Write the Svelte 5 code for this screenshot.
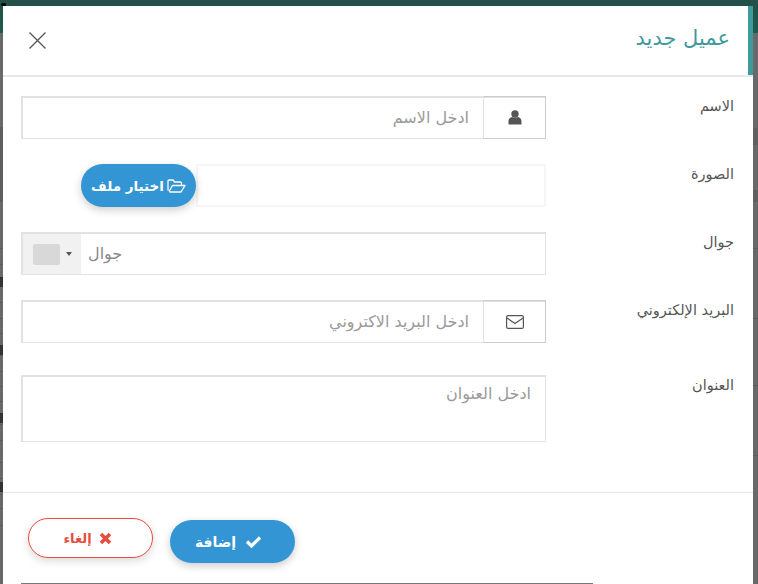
<script>
  const leftLines = [248, 264, 302, 318, 333, 355, 371, 386, 401, 424, 440, 462, 478, 494, 508, 525];
  const leftMarks = [277, 345, 413, 482];
  const rightLines = [248, 318, 385, 455];
</script>

<div class="page" dir="rtl">
  <div class="backdrop">
    <div class="topbar"></div>
    <i class="blob"></i>
    <i class="band left"></i>
    <i class="band right b1"></i>
    <i class="band right b2"></i>
    {#each leftLines as y}<i class="line left" style="top:{y}px"></i>{/each}
    {#each leftMarks as y}<i class="mark" style="top:{y}px"></i>{/each}
    {#each rightLines as y}<i class="line right" style="top:{y}px"></i>{/each}
  </div>

  <section class="modal">
    <header>
      <h1>عميل جديد</h1>
      <button class="close" aria-label="close">
        <svg width="17" height="17" viewBox="0 0 17 17"><path d="M.5.500l16 16M16.500.500l-16 16" stroke="#555" stroke-width="1.300" fill="none"/></svg>
      </button>
    </header>

    <form>
      <div class="row r1">
        <span class="label">الاسم</span>
        <div class="field">
          <span class="addon">
            <svg width="14" height="15" viewBox="0 0 14 15"><circle cx="7" cy="4" r="3.700" fill="#555"/><path d="M.5 15v-3.200C.5 9.300 2.300 8 4 7.600c1.800 1 4.200 1 6 0 1.700.4 3.500 1.700 3.500 4.200V15z" fill="#555" transform="translate(0 -.5)"/></svg>
          </span>
          <span class="input ph">ادخل الاسم</span>
        </div>
      </div>

      <div class="row r2">
        <span class="label">الصورة</span>
        <div class="filewrap">
          <span class="filebox"></span>
          <span class="filebtn">
            <svg width="19" height="14" viewBox="0 0 19 14"><path d="M2.500 13H14l4-6.500H5.500L2 12.500M1 11.500V2.300Q1 1 2.300 1H6l1.500 2H13q1.500 0 1.500 1.300v2.200" fill="none" stroke="#fff" stroke-width="1.300" stroke-linejoin="round"/></svg>
            اختيار ملف
          </span>
        </div>
      </div>

      <div class="row r3">
        <span class="label">جوال</span>
        <div class="field phone">
          <span class="flag"><i class="swatch"></i><i class="arrow"></i></span>
          <span class="phonetext" dir="rtl">جوال</span>
        </div>
      </div>

      <div class="row r4">
        <span class="label">البريد الإلكتروني</span>
        <div class="field">
          <span class="addon">
            <svg width="18" height="14" viewBox="0 0 18 14"><rect x=".6" y=".6" width="16.800" height="12.800" rx="1.500" fill="none" stroke="#555" stroke-width="1.200"/><path d="M1 3l8 5.500L17 3" fill="none" stroke="#555" stroke-width="1.200"/></svg>
          </span>
          <span class="input ph">ادخل البريد الاكتروني</span>
        </div>
      </div>

      <div class="row r5">
        <span class="label">العنوان</span>
        <div class="field area"><span class="ph">ادخل العنوان</span></div>
      </div>
    </form>

    <footer>
      <button class="btn primary">
        <svg width="17" height="13" viewBox="0 0 17 13"><path d="M2 6.500l4.500 4.500L15 2.500" fill="none" stroke="#fff" stroke-width="3.200"/></svg>
        إضافة
      </button>
      <button class="btn cancel">
        <svg width="13" height="13" viewBox="0 0 13 13"><path d="M2 2l9 9M11 2l-9 9" fill="none" stroke="#e74c3c" stroke-width="3.600"/></svg>
        إلغاء
      </button>
    </footer>
    <i class="under"></i>
  </section>
</div>

<style>
  :global(body) { margin: 0; background: #696969; }
  .page {
    position: relative; width: 758px; height: 584px; overflow: hidden;
    font-family: "DejaVu Sans", "Noto Sans", sans-serif; color: #555;
  }
  .backdrop { position: absolute; inset: 0; background: #696969; }
  .topbar { height: 33px; background: linear-gradient(#234f49, #1f5a4c); }
  .blob { position: absolute; left: 1px; top: 3px; width: 5px; height: 3px; border-radius: 2px; background: #000; z-index: 2; }
  .band { position: absolute; background: #5f5f5f; }
  .band.left { left: 0; width: 3px; top: 127px; height: 75px; }
  .band.right { right: 0; width: 5px; }
  .b1 { top: 128px; height: 17px; }
  .b2 { top: 190px; height: 12px; }
  .line { position: absolute; height: 1px; background: #5c5c5c; }
  .line.left { left: 0; width: 3px; }
  .line.right { right: 0; width: 5px; }
  .mark { position: absolute; left: 0; width: 3px; height: 10px; background: #333; }

  .modal {
    position: absolute; left: 3px; top: 6px; width: 750px; height: 578px;
    background: #fff; display: flex; flex-direction: column;
  }
  header {
    height: 70px; flex: none; box-sizing: border-box; display: flex; justify-content: space-between;
    align-items: center; padding: 0 18px 0 26px;
    border-right: 5px solid #3f9a9c;
    width: 750px;
  }
  h1 { margin: 0; font-size: 21px; font-weight: 400; color: #3f9a9c; line-height: 1; position: relative; top: -3px; }
  .close { background: none; border: 0; padding: 0 0 2px; line-height: 0; }
  form { flex: 1; border-top: 2px solid #e8e8e8; padding-top: 19px; margin-top: -1px; }
  .row { display: flex; padding: 0 19px 0 18px; justify-content: space-between; align-items: flex-start; }
  .label { font-size: 14.500px; line-height: 20px; color: #555; }
  .field { width: 525px; height: 43px; box-sizing: border-box; border: 1px solid #e2e2e2; border-top-width: 2px; border-left-width: 2px; display: flex; background: #fff; }
  .r2, .r3, .r4 { margin-top: 25px; }
  .r5 { margin-top: 32px; }
  .addon { width: 63px; box-sizing: border-box; flex: none; display: flex; align-items: center; justify-content: center; border: 1px solid #ccc; margin: -2px -1px -1px 0; border-left-color: #e0e0e0; }
  .input { flex: 1; display: flex; align-items: center; padding: 0 14px 2px; }
  .ph { color: #9a9a9a; font-size: 16px; }
  .filewrap { width: 465px; margin-left: 60px; height: 43px; display: flex; }
  .filebox { flex: 1; box-sizing: border-box; border: 2px solid #f6f6f6; height: 43px; }
  .filebtn {
    width: 115px; flex: none; height: 43px; border-radius: 22px; background: #3395d3; color: #fff;
    display: flex; align-items: center; justify-content: center; gap: 3px; font-size: 13.500px; font-weight: 700;
    box-shadow: 0 3px 8px rgba(0,0,0,.2);
  }
  .phone { direction: ltr; }
  .phonetext { color: #8a8a8a; font-size: 16px; align-self: center; margin: 0 0 2px 7px; }
  .flag { width: 58px; flex: none; background: #f1f1f1; display: flex; align-items: center; gap: 6px; padding-left: 10px; box-sizing: border-box; }
  .swatch { width: 27px; height: 21px; border-radius: 2px; background: #d8d8d8; }
  .arrow { width: 0; height: 0; border: 3.500px solid transparent; border-top: 4px solid #555; border-bottom: 0; }
  .area { height: 67px; padding: 7px 14px; display: block; }
  footer {
    height: 92px; flex: none; border-top: 1px solid #e6e6e6; display: flex; gap: 17px;
    flex-direction: row-reverse; justify-content: flex-end; padding: 25px 0 0 25px; box-sizing: border-box; direction: ltr; align-items: flex-start;
  }
  .btn { font: 700 14px "DejaVu Sans", sans-serif; border-radius: 22px; display: flex; align-items: center; justify-content: center; gap: 9px; direction: rtl; box-sizing: border-box; padding: 0; }
  .primary { width: 125px; height: 43px; background: #3395d3; color: #fff; border: 0; box-shadow: 0 3px 8px rgba(0,0,0,.2); margin-top: 2px; padding-right: 8px; }
  .cancel { width: 125px; height: 40px; background: #fff; color: #e74c3c; border: 1px solid #e74c3c; box-shadow: 0 3px 8px rgba(0,0,0,.15); padding-right: 6px; gap: 7px; font-size: 13px; }
  .under { position: absolute; left: 18px; width: 572px; bottom: 0; height: 1px; background: #777; }
</style>
